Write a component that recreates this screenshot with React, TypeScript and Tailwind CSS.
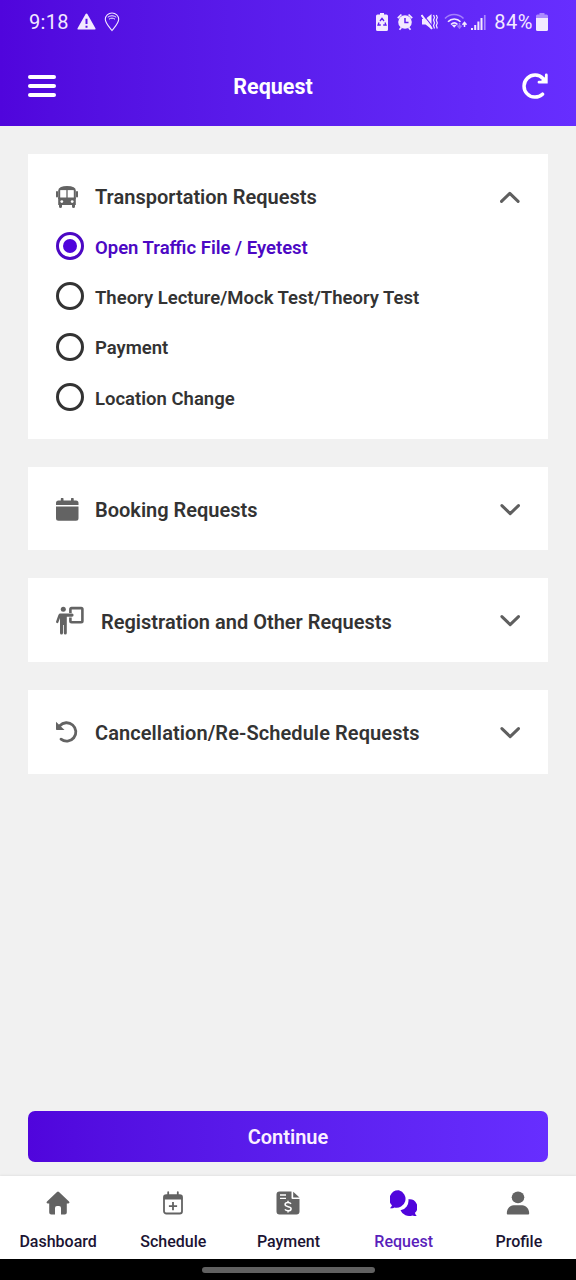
import { useState, type ReactNode } from 'react'
import clsx from 'clsx'

const StatusBar = () => (
  <div className="flex h-[44px] items-center justify-between pl-[28px] pr-[28px] text-[#f3e9ff]">
    <div className="flex items-center">
      <span className="w-[49px] pl-[1px] text-[20px] leading-[24px] tracking-[0.300px]">9:18</span>
      <svg width="19" height="18" viewBox="0 0 19 18">
        <path d="M8.6 1 .6 15.2c-.4.8 0 1.4.8 1.4h16.2c.8 0 1.2-.6.8-1.4L10.4 1c-.4-.8-1.4-.8-1.8 0Z" fill="currentColor" />
        <path d="M9.5 5.8v5.2M9.5 12.8v2" stroke="#5a12e8" strokeWidth="2" />
      </svg>
      <svg className="ml-[8px]" width="16" height="20" viewBox="0 0 16 20" fill="none" stroke="currentColor">
        <path d="M8 18.500C5.500 15.100 1.300 11.200 1.300 7.200a6.700 6.200 0 0 1 13.400 0c0 4-4.200 7.900-6.700 11.300Z" strokeWidth="1.100" />
        <path d="M3.800 5.200c2.500-1.900 5.900-1.900 8.400 0M5 7.200c1.800-1.400 4.200-1.400 6 0" strokeWidth="1" />
      </svg>
    </div>

    <div className="flex items-center">
      <svg width="12" height="18" viewBox="0 0 12 18">
        <path d="M4 0h4v1.500h2.500A1.500 1.500 0 0 1 12 3v13.500a1.500 1.500 0 0 1-1.500 1.500h-9A1.500 1.500 0 0 1 0 16.500V3a1.500 1.500 0 0 1 1.500-1.500h2.500Z" fill="currentColor" />
        <path d="m4 8 2-2.700L8 8M9 9.500l1 2.500H7.200M3 9.500 2 12h2.800" fill="none" stroke="#5f1cf0" strokeWidth="1.300" />
      </svg>
      <svg className="ml-[9px]" width="16" height="18" viewBox="0 0 16 18">
        <circle cx="8" cy="9" r="6.800" fill="currentColor" />
        <path d="M.8 5.200 4.400 1.500M15.200 5.200l-3.600-3.700M2.500 16.800l2-2.500M13.500 16.800l-2-2.500" stroke="currentColor" strokeWidth="1.700" />
        <path d="M8 5v4.500h3.500" fill="none" stroke="#5f1cf0" strokeWidth="1.500" />
      </svg>
      <svg className="ml-[8px]" width="17" height="18" viewBox="0 0 17 18">
        <path d="M1 6h3.500L10.500 1v15L4.500 11.500H1Z" fill="currentColor" />
        <path d="m2 1.500 9.500 12" stroke="#621ff5" strokeWidth="1.200" />
        <path d="m.5 2 10.500 14" stroke="currentColor" strokeWidth="2" />
        <path d="m12.500 2 1 2.500-1 2.500 1 3-1 2.500 1 3M15.300 2l1 2.500-1 2.500 1 3-1 2.500 1 3" fill="none" stroke="currentColor" strokeWidth="1.200" />
      </svg>
      <svg className="ml-[6px]" width="24" height="18" viewBox="0 0 24 18" fill="none" stroke="currentColor">
        <path d="M1 5.500c5-5.300 13-5.300 18.500 0" strokeWidth="1.600" opacity=".45" />
        <path d="M4 8.800c3.500-3.700 9-3.700 12.500 0M7 11.500c2-2 4.500-2 6.500 0" strokeWidth="1.600" />
        <path d="m7.500 11.800 2.700 2.900 2.700-2.900Z" fill="currentColor" stroke="none" />
        <path d="M15.500 10v4.500m-2-2 2 2.500 2-2.500" strokeWidth="1.600" opacity=".4" />
        <path d="M20.500 14V9.800m-2 2 2-2.300 2 2.300" strokeWidth="1.500" />
      </svg>
      <svg className="ml-[3px]" width="15" height="17" viewBox="0 0 15 17" fill="currentColor">
        <path d="M0 14h2v2H0zM3.200 11h2v5h-2zM6.400 7.500h2V16h-2zM9.500 4h2v12h-2z" />
        <path d="M12.900 1h1.700v15h-1.700z" opacity=".5" />
      </svg>
      <span className="ml-[8px] text-[20px] leading-[24px] tracking-[0.500px]">84%</span>
      <svg className="ml-[3px]" width="12" height="18" viewBox="0 0 12 18" fill="currentColor">
        <path d="M3.500 0h5v1.500h2A1.500 1.500 0 0 1 12 3v3H0V3a1.500 1.500 0 0 1 1.500-1.500h2Z" opacity=".5" />
        <path d="M0 5h12v11.500a1.500 1.500 0 0 1-1.500 1.500h-9A1.500 1.500 0 0 1 0 16.500Z" />
      </svg>
    </div>
  </div>
)

const BusIcon = () => (
  <svg className="mt-[1px]" width="22" height="22" viewBox="0 0 22 22" fill="none" stroke="currentColor">
    <path d="M3.200 13V4.500C3.200 2.200 6.500 1 11 1s7.800 1.200 7.800 3.500V13" strokeWidth="2" />
    <path d="M4 3h14" strokeWidth="2.200" />
    <path d="M11 4v8" strokeWidth="1.300" />
    <path d="M1 6v4.500M21 6v4.500" strokeWidth="2" strokeLinecap="round" />
    <path d="M2.200 11.500h17.600V19H2.200Z" fill="currentColor" stroke="none" />
    <path d="M4.500 18v2.500M17.500 18v2.500" strokeWidth="3" strokeLinecap="round" />
    <circle cx="5.800" cy="15.600" r="1.400" fill="#fff" stroke="none" />
    <circle cx="16.200" cy="15.600" r="1.400" fill="#fff" stroke="none" />
  </svg>
)

const CalendarIcon = () => (
  <svg width="23" height="23" viewBox="0 0 23 23" fill="currentColor">
    <path d="M0 7V5a2.500 2.500 0 0 1 2.500-2.500H4.800V1a1.100 1.100 0 0 1 2.700 0v1.500h7.500V1a1.100 1.100 0 0 1 2.700 0v1.500H20A2.500 2.500 0 0 1 22.500 5v2ZM0 8.500h22.500v11.700a2.500 2.500 0 0 1-2.500 2.500H2.500A2.500 2.500 0 0 1 0 20.200Z" />
  </svg>
)

const TeacherIcon = () => (
  <svg width="28" height="29" viewBox="0 0 28 29" fill="none" stroke="currentColor">
    <circle cx="7.300" cy="3.200" r="2.500" fill="currentColor" stroke="none" />
    <path d="M4.500 7.500H16a1.500 1.500 0 0 1 0 3.200h-5.200V27a1.500 1.500 0 0 1-3 0v-8H7v8a1.500 1.500 0 0 1-3 0V12l-1.700 4.500a1.200 1.200 0 0 1-2.200-.9L2.300 9.200c.5-1.200 1-1.700 2.200-1.700Z" fill="currentColor" stroke="none" />
    <path d="M14.400 7V3.300A1.200 1.200 0 0 1 15.600 2.100h9.600a1.200 1.200 0 0 1 1.200 1.200v11.800a1.200 1.200 0 0 1-1.200 1.200h-9.600a1.200 1.200 0 0 1-1.200-1.200v-3.600" strokeWidth="2.600" strokeLinejoin="round" />
  </svg>
)

const UndoIcon = () => (
  <svg width="22" height="22" viewBox="0 0 22 22" fill="none" stroke="currentColor">
    <path d="M3.800 4.800A9.200 9.200 0 1 1 5 18.200" strokeWidth="2.800" strokeLinecap="round" />
    <path d="M0 .8 8.500 8.900H.7a.7.700 0 0 1-.7-.7Z" fill="currentColor" stroke="none" />
  </svg>
)

const HomeIcon = () => (
  <svg width="24" height="24" viewBox="0 0 24 24" fill="currentColor">
    <path d="M11 1a1.500 1.500 0 0 1 2 0l10 9.500c.9.900.4 2-.8 2h-1.400v9A2 2 0 0 1 18.800 23.500H15V17a2 2 0 0 0-2-2h-2a2 2 0 0 0-2 2v6.500H5.200a2 2 0 0 1-2-2v-9H1.800c-1.200 0-1.700-1.100-.8-2Z" />
  </svg>
)

const ScheduleIcon = () => (
  <svg width="20" height="24" viewBox="0 0 20 24" fill="none" stroke="currentColor">
    <path d="M5.200 1.200v4M14.800 1.200v4" strokeWidth="1.800" strokeLinecap="round" />
    <rect x="1" y="4.200" width="18" height="18.300" rx="2.300" strokeWidth="1.800" />
    <path d="M.8 4.500h18.400v4H.8Z" fill="currentColor" stroke="none" />
    <path d="M10 11v8.200M5.900 15.100h8.200" strokeWidth="1.800" />
  </svg>
)

const InvoiceIcon = () => (
  <svg width="24" height="24" viewBox="0 0 24 24" fill="none">
    <path d="M3.500.5h12V7a1 1 0 0 0 1 1h7v12.500a3 3 0 0 1-3 3h-17a3 3 0 0 1-3-3v-17a3 3 0 0 1 3-3Z" fill="currentColor" />
    <path d="m17.200.8 6.300 5.700h-6.300Z" fill="currentColor" />
    <path d="M4 4h6M4 7.300h6" stroke="#fff" strokeWidth="1.300" />
    <path d="M15 12.800c-.6-.9-1.700-1.300-3-1.300-1.700 0-2.900.8-2.900 2.100 0 2.800 6 1.400 6 4.100 0 1.300-1.300 2.100-3 2.100-1.400 0-2.500-.5-3.200-1.400M12 9.800v1.700M12 19.800v1.700" stroke="#fff" strokeWidth="1.500" />
  </svg>
)

const ChatIcon = () => (
  <svg width="27" height="27" viewBox="0 0 27 27" fill="currentColor">
    <path d="M18.400 9.300a7.900 7.900 0 0 1 6.600 13.500c.1 1.300.6 1.900 1.300 2.500.3.300.1.800-.3.800-1.300 0-2.500-.2-3.500-.7A9.200 9.200 0 0 1 10.500 20.300a9.700 9.700 0 0 0 7.900-11Z" />
    <path d="M8.900.3a8.700 8.700 0 1 1-4.600 17.200c-1 .7-2.200.9-3.500.9-.4 0-.6-.5-.3-.8.7-.7 1.300-1.300 1.400-2.300A8.900 8.900 0 0 1 8.900.3Z" />
  </svg>
)

const ProfileIcon = () => (
  <svg width="24" height="24" viewBox="0 0 24 24" fill="currentColor">
    <ellipse cx="12" cy="6.300" rx="6.300" ry="5.900" />
    <path d="M.8 22.300c0-4.300 3-8 7-8h8.400c4 0 7 3.700 7 8 0 .8-.5 1.200-1.200 1.200H2c-.7 0-1.200-.4-1.200-1.200Z" />
  </svg>
)

const Chevron = ({ open }: { open?: boolean }) => (
  <svg className={clsx('mt-[1px] text-[#5f5f5f]', open && 'rotate-180')} width="20" height="12" viewBox="0 0 20 12" fill="none">
    <path d="m1.900 1.600 8.300 8 8.300-8" stroke="currentColor" strokeWidth="3" strokeLinecap="round" strokeLinejoin="round" />
  </svg>
)

interface SectionProps {
  icon: ReactNode
  title: string
  open?: boolean
  className: string
  titleClass?: string
  children?: ReactNode
}

const Section = ({ icon, title, open, className, titleClass, children }: SectionProps) => (
  <section className={clsx('bg-white px-[28px]', className)}>
    <div className="flex h-[84px] items-center">
      <span className="w-[22px] shrink-0 text-[#636363]">{icon}</span>
      <h2 className={clsx('flex-1 text-[20px] font-semibold leading-[24px]', titleClass ?? 'ml-[17px] pt-[2px]')}>{title}</h2>
      <Chevron open={open} />
    </div>
    {children}
  </section>
)

const options = ['Open Traffic File / Eyetest', 'Theory Lecture/Mock Test/Theory Test', 'Payment', 'Location Change']

const navItems = [
  { label: 'Dashboard', icon: HomeIcon },
  { label: 'Schedule', icon: ScheduleIcon },
  { label: 'Payment', icon: InvoiceIcon },
  { label: 'Request', icon: ChatIcon, active: true },
  { label: 'Profile', icon: ProfileIcon },
]

const App = () => {
  const [selected, setSelected] = useState(options[0])

  return (
    <div className="flex h-[1280px] w-[576px] flex-col overflow-hidden bg-[#f1f1f1] font-['Roboto',sans-serif] text-[#333333]">
      <header className="h-[126px] shrink-0 bg-linear-to-r from-[#5005dc] to-[#672eff]">
        <StatusBar />
        <div className="grid h-[83px] grid-cols-[28px_1fr_58px] items-center px-[28px] text-white">
          <button className="flex w-[28px] flex-col gap-[5px]">
            <span className="h-[4px] rounded-full bg-white" />
            <span className="h-[4px] rounded-full bg-white" />
            <span className="h-[4px] rounded-full bg-white" />
          </button>
          <h1 className="pt-[2px] text-center text-[21.500px] font-bold leading-[26px]">Request</h1>
          <button className="justify-self-end">
            <svg width="26" height="26" viewBox="0 0 26 26" fill="none">
              <path d="M20.500 21.200A11 11 0 1 1 21 5.500" stroke="currentColor" strokeWidth="3.500" strokeLinecap="round" />
              <path d="M24.300 2V9.200H17" stroke="currentColor" strokeWidth="2.800" strokeLinecap="round" />
              <path d="M25 2v7.500h-7.500Z" fill="currentColor" />
            </svg>
          </button>
        </div>
      </header>

      <main className="flex flex-1 flex-col px-[28px] pt-[28px]">
        <Section icon={<BusIcon />} title="Transportation Requests" open className="h-[285px]">
          <div className="-mt-[6px] flex flex-col gap-[22.400px]">
            {options.map((option) => {
              const active = option === selected
              return (
                <button
                  key={option}
                  onClick={() => setSelected(option)}
                  className={clsx('flex h-[28px] items-center', active ? 'text-[#4c08c4]' : 'text-[#333333]')}
                >
                  <span className="flex size-[28px] items-center justify-center rounded-full border-[3px] border-current">
                    {active && <span className="size-[14px] rounded-full bg-[#5005dc]" />}
                  </span>
                  <span className="ml-[11px] pt-[3px] text-[18.500px] font-semibold leading-[24px]">{option}</span>
                </button>
              )
            })}
          </div>
        </Section>
        <Section icon={<CalendarIcon />} title="Booking Requests" className="mt-[28px] h-[83px]" />
        <Section
          icon={<TeacherIcon />}
          title="Registration and Other Requests"
          className="mt-[28px] h-[84px]"
          titleClass="ml-[23px] pt-[3px]"
        />
        <Section
          icon={<UndoIcon />}
          title="Cancellation/Re-Schedule Requests"
          className="mt-[28px] h-[84px]"
          titleClass="ml-[17px] pt-[2px] tracking-[0.080px]"
        />

        <button className="mb-[14px] mt-auto h-[51px] rounded-[7px] bg-linear-to-r from-[#5005dc] to-[#672eff] text-[20px] font-semibold leading-[24px] text-[#fbf0ff]">
          Continue
        </button>
      </main>

      <nav className="grid h-[83px] shrink-0 grid-cols-5 bg-white shadow-[0_-1px_2px_rgba(0,0,0,0.06)]">
        {navItems.map(({ label, icon: Icon, active }) => (
          <div key={label} className={clsx('flex flex-col items-center', active ? 'text-[#5005dc]' : 'text-[#636363]')}>
            <div className="mt-[12px] flex h-[30px] items-center">
              <Icon />
            </div>
            <span className={clsx('ml-[1px] mt-[11px] text-[16px] font-medium leading-[25px]', active ? 'text-[#5a1fbb]' : 'text-[#1b1433]')}>
              {label}
            </span>
          </div>
        ))}
      </nav>

      <div className="flex h-[21px] shrink-0 items-center justify-center bg-black">
        <div className="h-[6px] w-[173px] rounded-full bg-[#616161]" />
      </div>
    </div>
  )
}

export default App
